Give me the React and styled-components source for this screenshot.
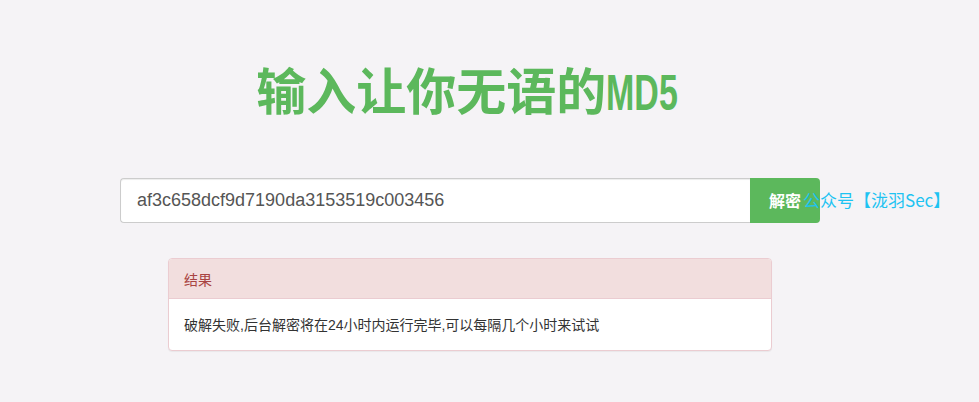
import React from "react";
import styled, { createGlobalStyle } from "styled-components";

const GlobalStyle = createGlobalStyle`
  html, body {
    margin: 0;
    padding: 0;
    background-color: #f5f3f6;
    font-family: "Liberation Sans", "Noto Sans CJK SC", sans-serif;
    color: #333;
  }
`;

const Page = styled.div`
  width: 979px;
  height: 402px;
  overflow: hidden;
`;

const Container = styled.div`
  width: 700px;
  margin-left: 120px;
  display: flex;
  flex-direction: column;
  align-items: center;
`;

const Title = styled.h1`
  margin: 55px 0 0 0;
  height: 66px;
  line-height: 66px;
  font-family: "Noto Sans CJK SC", sans-serif;
  font-size: 50px;
  font-weight: 700;
  color: #5cb85c;
  white-space: nowrap;
  transform: translateX(-3px);
`;

const Narrow = styled.span`
  display: inline-block;
  font-family: "Liberation Sans", sans-serif;
  transform: scaleX(0.68);
  transform-origin: left center;
  margin-right: -34px;
`;

const InputGroup = styled.div`
  position: relative;
  margin-top: 57px;
  width: 700px;
  height: 45px;
  display: flex;
`;

const HashInput = styled.input`
  flex: 1;
  box-sizing: border-box;
  height: 45px;
  padding: 0 16px;
  border: 1px solid #ccc;
  border-right: none;
  border-radius: 4px 0 0 4px;
  background: #fff;
  font-family: "Liberation Sans", sans-serif;
  font-size: 18px;
  color: #555;
  outline: none;
  box-shadow: inset 0 1px 1px rgba(0, 0, 0, 0.075);
`;

const SubmitButton = styled.button`
  width: 70px;
  height: 45px;
  border: none;
  border-radius: 0 4px 4px 0;
  background-color: #5cb85c;
  color: #fff;
  font-family: "Noto Sans CJK SC", sans-serif;
  font-size: 16px;
  font-weight: 700;
  padding: 0 0 2px 0;
  cursor: pointer;
`;

const Notice = styled.span`
  position: absolute;
  left: 683px;
  top: 12px;
  font-family: "Noto Sans CJK SC", sans-serif;
  font-size: 17px;
  font-weight: 400;
  line-height: 20px;
  color: #1ec3f2;
  white-space: nowrap;
  pointer-events: none;
`;

const Panel = styled.div`
  margin-top: 35px;
  width: 604px;
  box-sizing: border-box;
  border: 1px solid #ebccd1;
  border-radius: 4px;
  background: #fff;
  box-shadow: 0 1px 1px rgba(0, 0, 0, 0.05);
  overflow: hidden;
`;

const PanelHeading = styled.div`
  height: 40px;
  box-sizing: border-box;
  padding: 0 15px;
  display: flex;
  align-items: center;
  background-color: #f2dede;
  border-bottom: 1px solid #ebccd1;
  color: #a94442;
  font-size: 14px;
`;

const PanelBody = styled.div`
  height: 51px;
  box-sizing: border-box;
  padding: 0 15px 2px;
  display: flex;
  align-items: center;
  font-size: 14px;
  color: #333;
`;

export default function App() {
  return (
    <Page>
      <GlobalStyle />
      <Container>
        <Title>
          输入让你无语的<Narrow>MD5</Narrow>
        </Title>
        <InputGroup>
          <HashInput readOnly value="af3c658dcf9d7190da3153519c003456" />
          <SubmitButton>解密</SubmitButton>
          <Notice>公众号【泷羽Sec】</Notice>
        </InputGroup>
        <Panel>
          <PanelHeading>结果</PanelHeading>
          <PanelBody>
            破解失败,后台解密将在24小时内运行完毕,可以每隔几个小时来试试
          </PanelBody>
        </Panel>
      </Container>
    </Page>
  );
}
